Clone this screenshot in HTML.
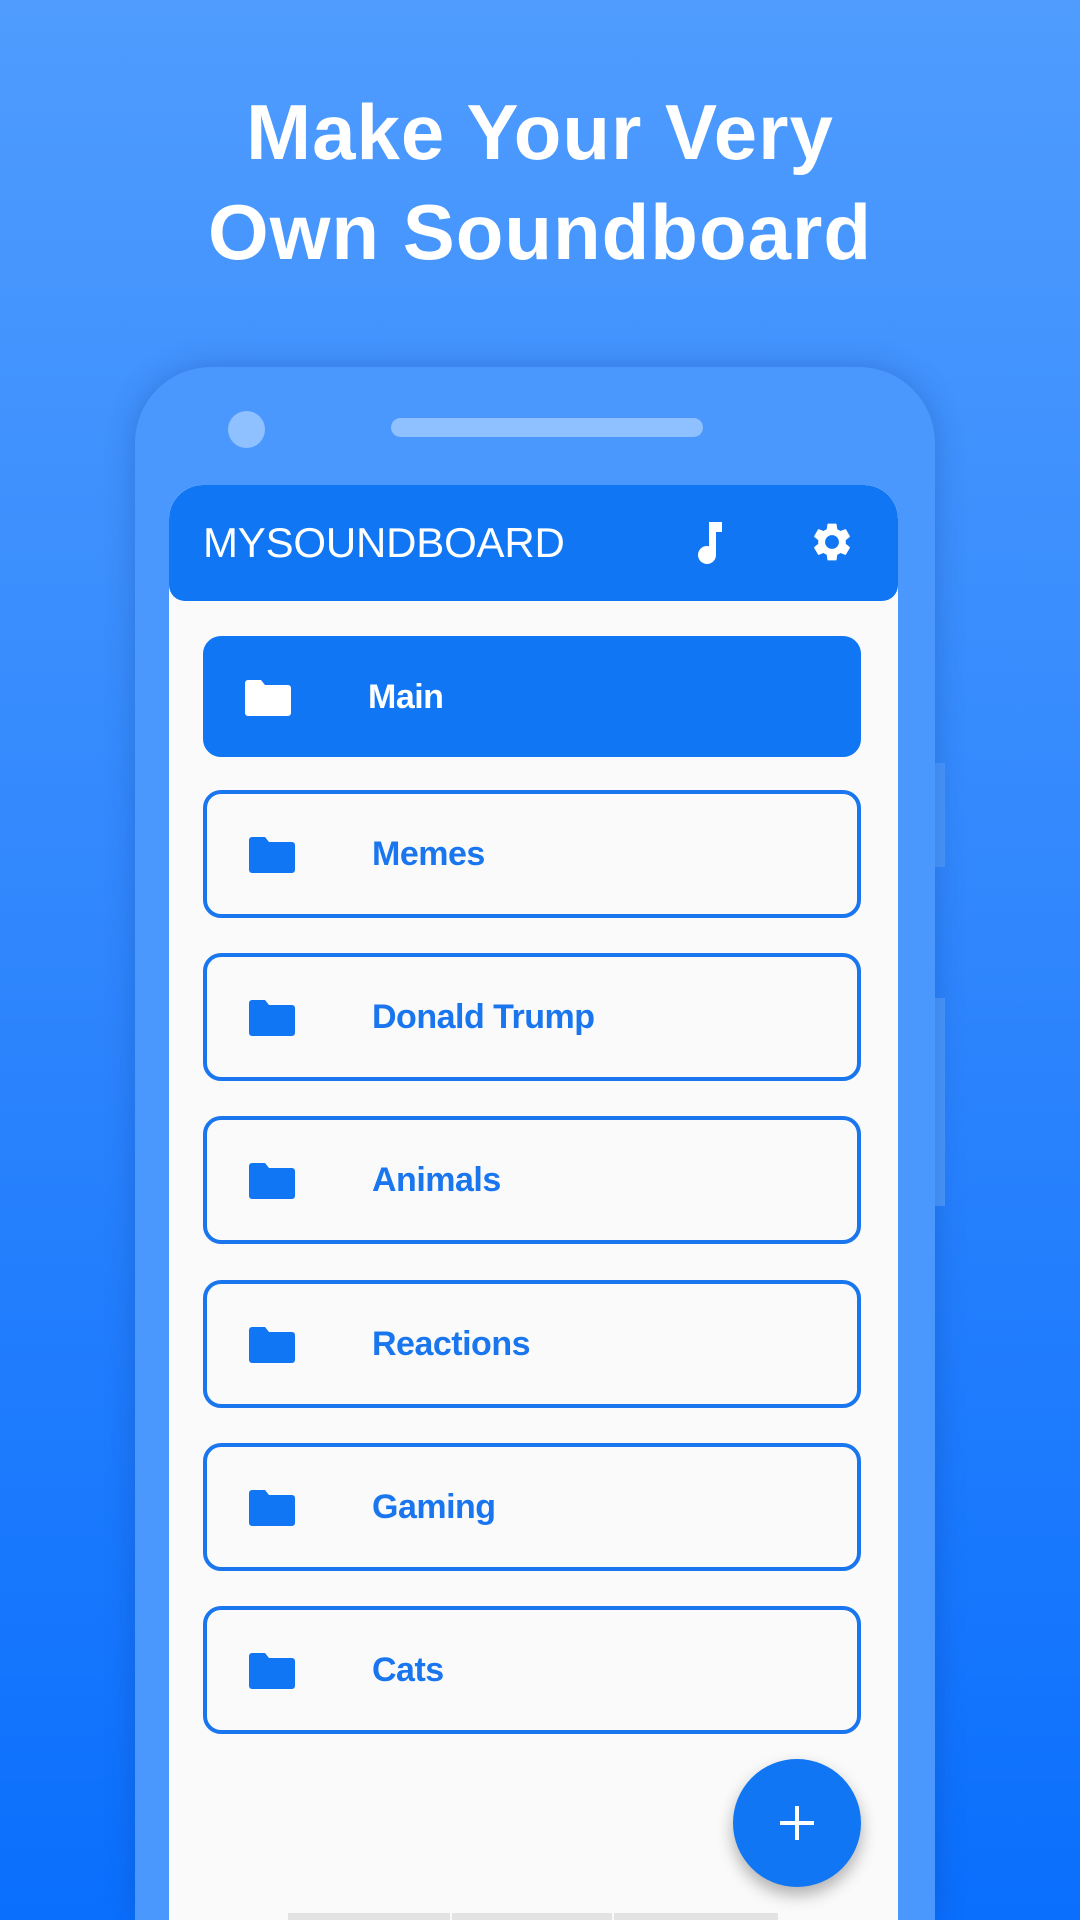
<!DOCTYPE html>
<html><head><meta charset="utf-8"><style>
*{margin:0;padding:0;box-sizing:border-box}
html,body{width:1080px;height:1920px;overflow:hidden}
body{background:linear-gradient(180deg,#4f9cfe 0%,#2f86fd 50%,#0a6ffd 100%);font-family:"Liberation Sans",sans-serif;position:relative}
.title{position:absolute;top:82px;left:0;width:1080px;text-align:center;color:#fff;font-weight:bold;font-size:78px;line-height:100px;letter-spacing:1px}
.phone{position:absolute;left:135px;top:367px;width:800px;height:1553px;background:#4a98fe;border-radius:76px 76px 0 0;box-shadow:0 0 30px rgba(0,40,120,0.25)}
.btn{position:absolute;left:932px;width:13px;background:#4a98fe}
.cam{position:absolute;left:228px;top:411px;width:37px;height:37px;border-radius:50%;background:#8fc0ff}
.spk{position:absolute;left:391px;top:418px;width:312px;height:19px;border-radius:10px;background:#8fc0ff}
.screen{position:absolute;left:169px;top:485px;width:729px;height:1435px;background:#fafafa;border-radius:34px 34px 0 0;overflow:hidden}
.bar{position:absolute;left:0;top:0;width:729px;height:116px;background:#1076f3;border-radius:34px 34px 16px 16px}
.bar .t{position:absolute;left:34px;top:32px;color:#fff;font-size:42px;line-height:52px;letter-spacing:-0.2px}
.card{position:absolute;left:203px;width:658px;height:128px;border:4px solid #1a76ee;border-radius:18px;background:#fafafa}
.card.main{background:#1076f3;border-color:#1076f3;height:121px}
.card svg{position:absolute;left:42px;top:43px}
.card span{position:absolute;left:165px;top:40px;font-size:34px;line-height:40px;color:#1a76ee;font-weight:bold;letter-spacing:-0.5px}
.card.main span{color:#fff;left:161px;top:37px}
.card.main svg{left:38px;top:40px}
.fab{position:absolute;left:733px;top:1759px;width:128px;height:128px;border-radius:50%;background:#1076f3;box-shadow:0 8px 16px rgba(0,0,0,0.3)}
.fab:before{content:"";position:absolute;left:47px;top:62px;width:34px;height:4px;background:#fff}
.fab:after{content:"";position:absolute;left:62px;top:47px;width:4px;height:34px;background:#fff}
.nav{position:absolute;top:1913px;height:7px;background:#e3e3e3}
</style></head><body>
<div class="title">Make Your Very<br>Own Soundboard</div>
<div class="btn" style="top:763px;height:104px"></div>
<div class="btn" style="top:998px;height:208px"></div>
<div class="phone"></div>
<div class="cam"></div>
<div class="spk"></div>
<div class="screen">
<div class="bar"><div class="t">MYSOUNDBOARD</div>
<svg style="position:absolute;left:526px;top:35px" width="32" height="44" viewBox="0 0 32 44"><path d="M14 2h13v10h-6v23a9 9 0 1 1-7-8.8z" fill="#fff"/></svg>
<svg style="position:absolute;left:640px;top:34px" width="46" height="46" viewBox="0 0 24 24"><path fill="#fff" d="M19.14 12.94c.04-.3.06-.61.06-.94 0-.32-.02-.64-.07-.94l2.030-1.58a.49.49 0 0 0 .12-.61l-1.92-3.32a.49.49 0 0 0-.59-.22l-2.39.96c-.5-.38-1.030-.7-1.62-.94l-.36-2.54a.48.48 0 0 0-.48-.41h-3.84c-.24 0-.43.17-.47.41l-.36 2.54c-.59.24-1.13.57-1.62.94l-2.39-.96a.48.48 0 0 0-.59.22L2.74 8.87c-.12.21-.08.47.12.61l2.030 1.58c-.05.3-.09.63-.09.94s.02.64.07.94l-2.030 1.58a.49.49 0 0 0-.12.61l1.92 3.32c.12.22.37.29.59.22l2.39-.96c.5.38 1.030.7 1.62.94l.36 2.54c.05.24.24.41.48.41h3.84c.24 0 .44-.17.47-.41l.36-2.54c.59-.24 1.13-.56 1.62-.94l2.39.96c.22.08.47 0 .59-.22l1.92-3.32c.12-.22.07-.47-.12-.61l-2.010-1.58zM12 15.6A3.6 3.6 0 1 1 12 8.4a3.6 3.6 0 0 1 0 7.2z"/></svg>
</div>
</div>
<div class="card main" style="top:636px"><svg width="46" height="36" viewBox="0 0 46 36"><path d="M3 0h13l4 5h23a3 3 0 0 1 3 3v25a3 3 0 0 1-3 3H3a3 3 0 0 1-3-3V3a3 3 0 0 1 3-3z" fill="#fff"/></svg><span>Main</span></div>
<div class="card" style="top:790px"><svg width="46" height="36" viewBox="0 0 46 36"><path d="M3 0h13l4 5h23a3 3 0 0 1 3 3v25a3 3 0 0 1-3 3H3a3 3 0 0 1-3-3V3a3 3 0 0 1 3-3z" fill="#1076f3"/></svg><span>Memes</span></div>
<div class="card" style="top:953px"><svg width="46" height="36" viewBox="0 0 46 36"><path d="M3 0h13l4 5h23a3 3 0 0 1 3 3v25a3 3 0 0 1-3 3H3a3 3 0 0 1-3-3V3a3 3 0 0 1 3-3z" fill="#1076f3"/></svg><span>Donald Trump</span></div>
<div class="card" style="top:1116px"><svg width="46" height="36" viewBox="0 0 46 36"><path d="M3 0h13l4 5h23a3 3 0 0 1 3 3v25a3 3 0 0 1-3 3H3a3 3 0 0 1-3-3V3a3 3 0 0 1 3-3z" fill="#1076f3"/></svg><span>Animals</span></div>
<div class="card" style="top:1280px"><svg width="46" height="36" viewBox="0 0 46 36"><path d="M3 0h13l4 5h23a3 3 0 0 1 3 3v25a3 3 0 0 1-3 3H3a3 3 0 0 1-3-3V3a3 3 0 0 1 3-3z" fill="#1076f3"/></svg><span>Reactions</span></div>
<div class="card" style="top:1443px"><svg width="46" height="36" viewBox="0 0 46 36"><path d="M3 0h13l4 5h23a3 3 0 0 1 3 3v25a3 3 0 0 1-3 3H3a3 3 0 0 1-3-3V3a3 3 0 0 1 3-3z" fill="#1076f3"/></svg><span>Gaming</span></div>
<div class="card" style="top:1606px"><svg width="46" height="36" viewBox="0 0 46 36"><path d="M3 0h13l4 5h23a3 3 0 0 1 3 3v25a3 3 0 0 1-3 3H3a3 3 0 0 1-3-3V3a3 3 0 0 1 3-3z" fill="#1076f3"/></svg><span>Cats</span></div>
<div class="fab"></div>
<div class="nav" style="left:288px;width:162px"></div>
<div class="nav" style="left:452px;width:160px"></div>
<div class="nav" style="left:614px;width:164px"></div>
</body></html>
